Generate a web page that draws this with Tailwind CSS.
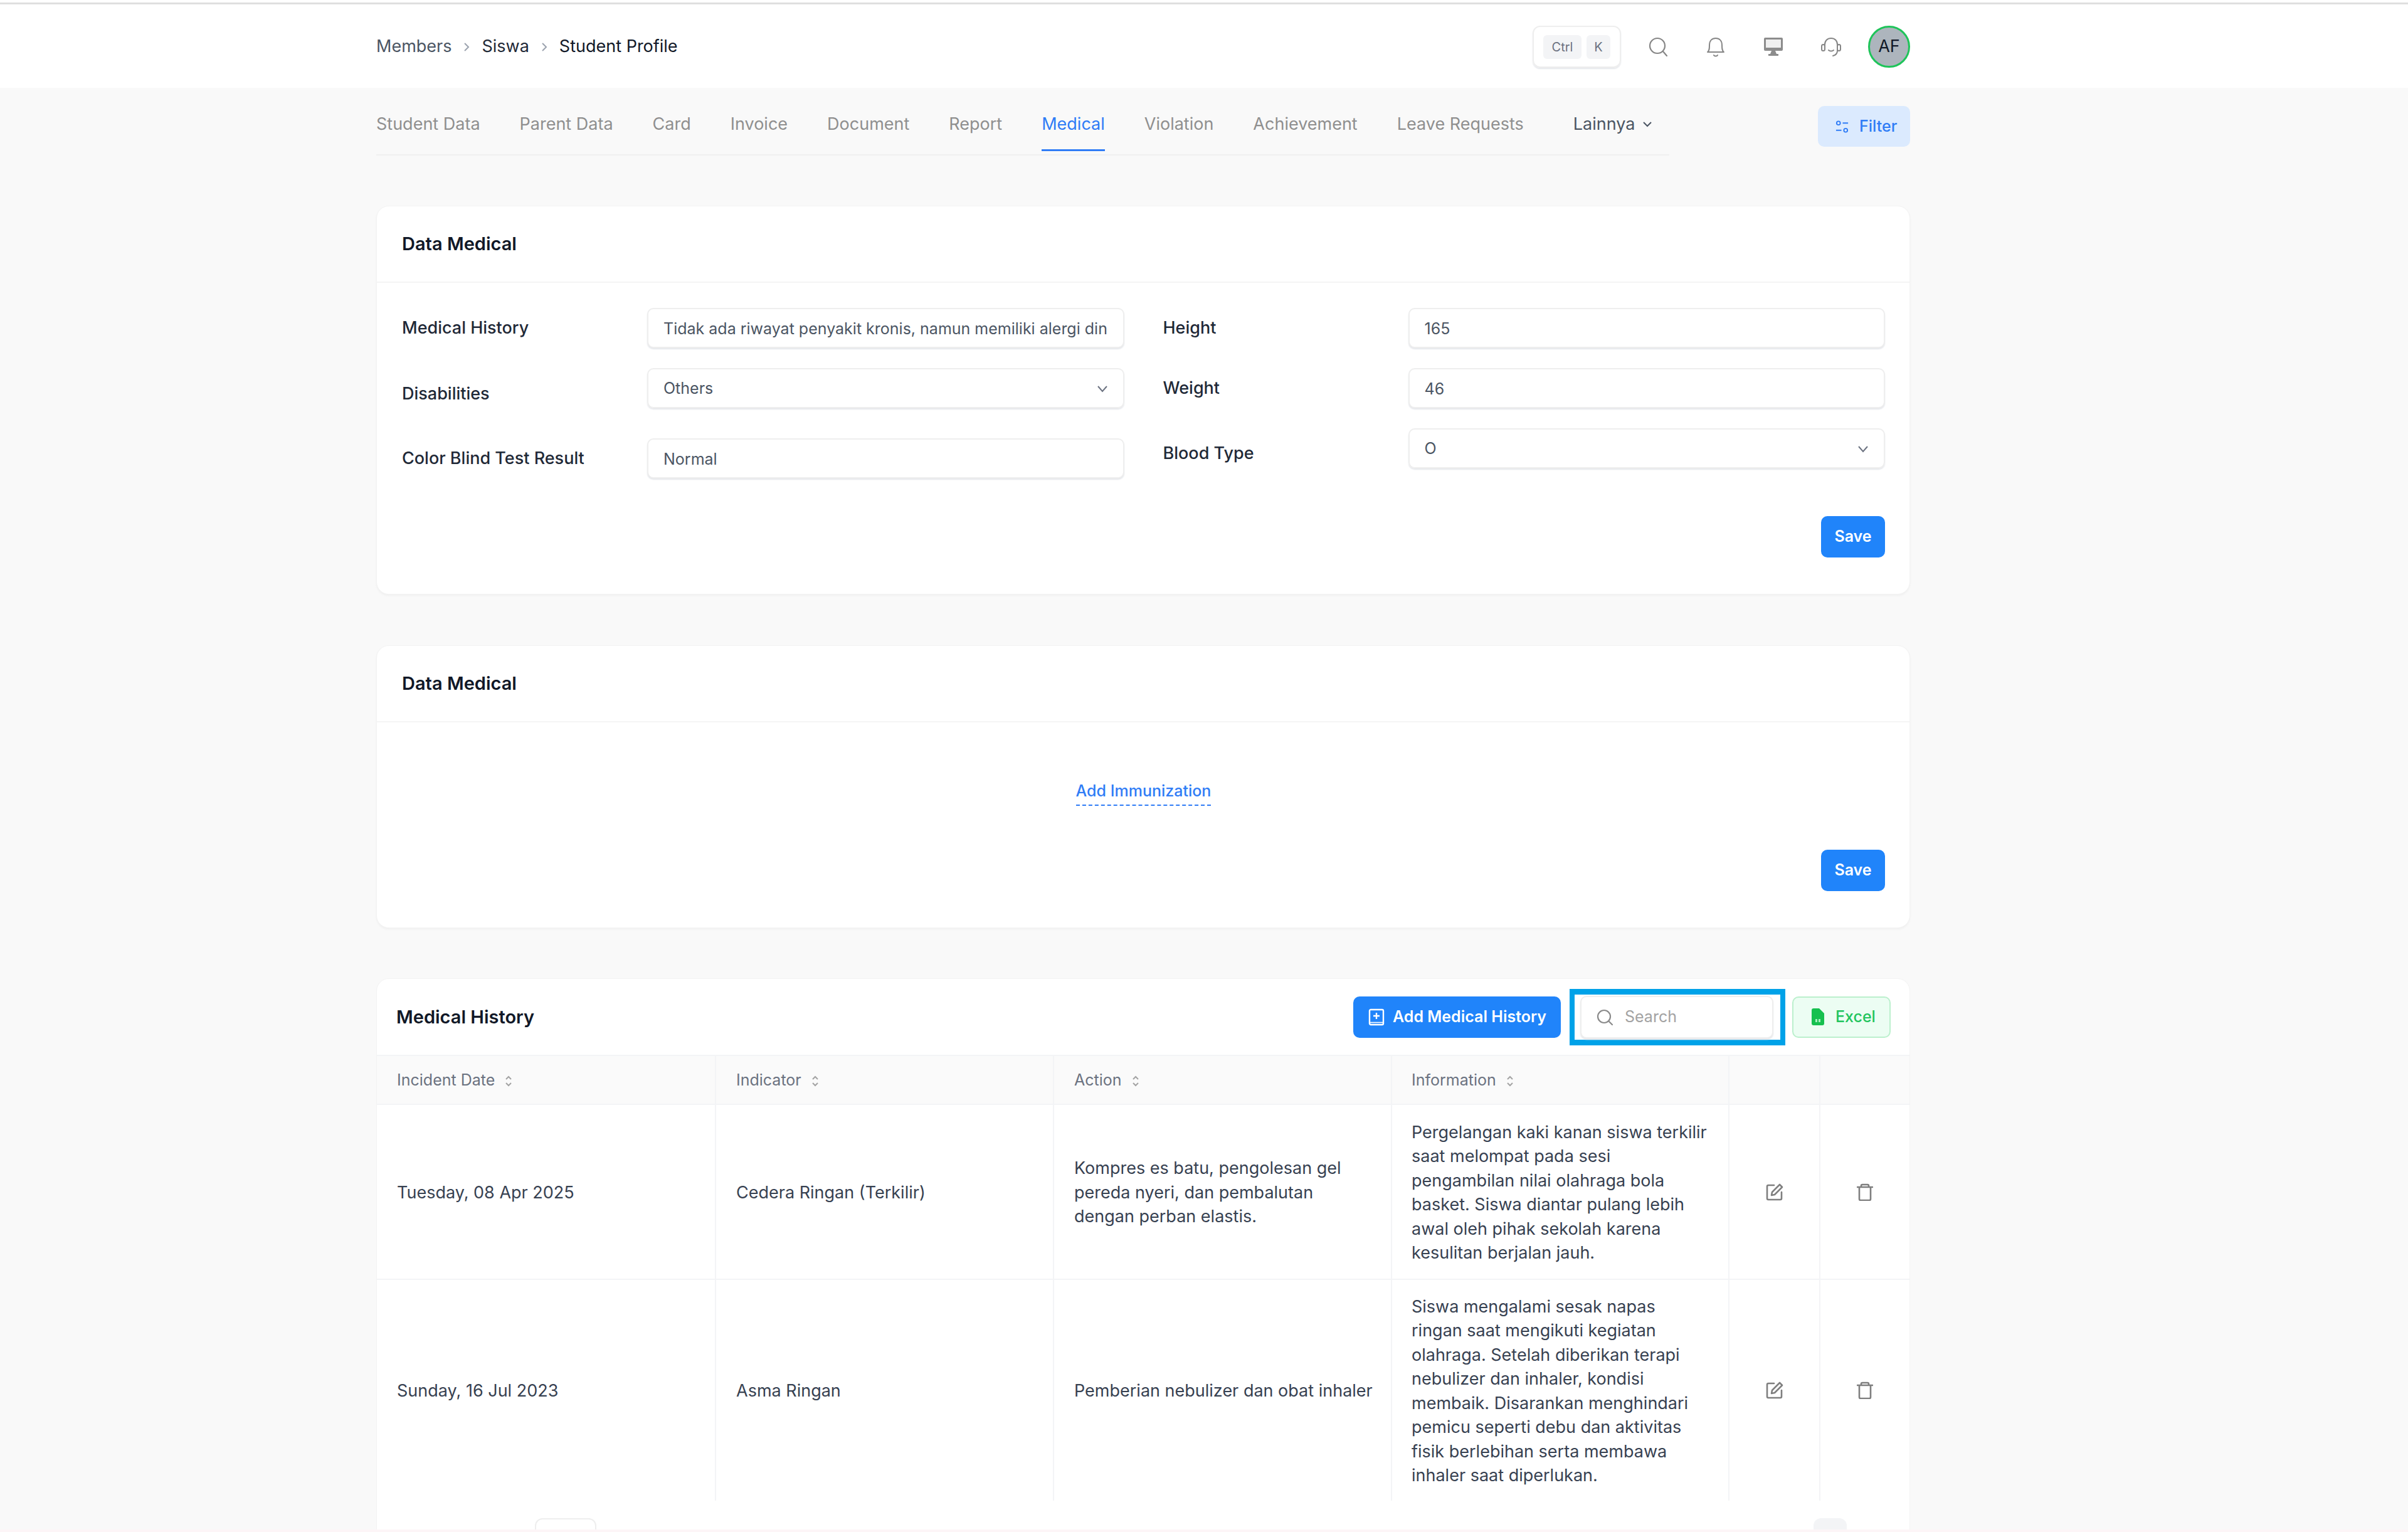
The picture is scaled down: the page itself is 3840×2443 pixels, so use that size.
<!DOCTYPE html>
<html lang="en">
<head>
    <meta charset="UTF-8">
    <meta name="viewport" content="width=device-width, initial-scale=1.0">
    <title>Student Profile - Medical</title>
    <script src="https://cdn.jsdelivr.net/npm/@tailwindcss/browser@4"></script>
</head>
<body class="bg-[#f9f9f9] font-['Inter',sans-serif] text-[27px] text-[#374151] h-[2443px] overflow-hidden relative">

    <!-- Top Bar -->
    <div class="h-[4px] bg-white"></div>
    <div class="h-[3px] bg-[#dfdfdf]"></div>

    <!-- Header -->
    <div class="h-[133px] bg-white pt-[2px]">
        <div class="w-[2446px] ml-[600px] h-full flex items-center justify-between">
            <div class="flex items-center text-[27px]">
                <span class="text-[#4b5563]">Members</span>
                <svg class="w-[16px] h-[24px] mx-[16px] text-[#9ca3af]" viewBox="0 0 16 24" fill="none" stroke="currentColor" stroke-width="2"><path d="M5 6l6 6-6 6"/></svg>
                <span class="text-[#1f2937]">Siswa</span>
                <svg class="w-[16px] h-[24px] mx-[16px] text-[#9ca3af]" viewBox="0 0 16 24" fill="none" stroke="currentColor" stroke-width="2"><path d="M5 6l6 6-6 6"/></svg>
                <span class="text-[#111827]">Student Profile</span>
            </div>
            <div class="flex items-center">
                <div class="w-[141px] h-[67px] border-2 border-[#eeeeee] rounded-[12px] shadow-[0_2px_2px_#e5e7eb] flex items-center gap-[8px] pl-[15px] text-[20px] text-[#6b7280]">
                    <span class="w-[61px] h-[38px] bg-[#f3f4f6] rounded-[6px] flex items-center justify-center">Ctrl</span>
                    <span class="w-[38px] h-[38px] bg-[#f3f4f6] rounded-[6px] flex items-center justify-center">K</span>
                </div>
                <!-- search -->
                <svg class="w-[30px] h-[31px] ml-[44px] text-[#868686]" viewBox="0 0 30 31" fill="none" stroke="currentColor" stroke-width="2.2" stroke-linecap="round"><circle cx="14" cy="14" r="12"/><path d="M23 23l6 7"/></svg>
                <!-- bell -->
                <svg class="w-[30px] h-[32px] ml-[62px] text-[#868686]" viewBox="0 0 30 32" fill="none" stroke="currentColor" stroke-width="2" stroke-linejoin="round" stroke-linecap="round"><path d="M2 24c3-2 3-6 3-11C5 6 9 2 15 2s10 4 10 11c0 5 0 9 3 11z"/><path d="M12 29c1 2 5 2 6 0"/></svg>
                <!-- monitor -->
                <svg class="w-[30px] h-[29px] ml-[62px] text-[#8c8c8c]" viewBox="0 0 30 29" fill="currentColor"><path d="M2 0h26a2 2 0 0 1 2 2v17a2 2 0 0 1-2 2H2a2 2 0 0 1-2-2V2a2 2 0 0 1 2-2z"/><path d="M3 3h24v13H3z" fill="#efefef"/><path d="M12 21h6l2 5h3v3H7v-3h3z"/></svg>
                <!-- headset -->
                <svg class="w-[32px] h-[32px] ml-[61px] text-[#868686]" viewBox="0 0 32 32" fill="none" stroke="currentColor" stroke-width="2" stroke-linecap="round"><path d="M6 13v-1C6 6 10 2 16 2s10 4 10 10v10c0 4-3 7-7 8"/><rect x="1" y="12" width="5" height="10" rx="2.5"/><rect x="26" y="12" width="5" height="10" rx="2.5"/><path d="M12 21c2 2 6 2 8 0"/></svg>
                <div class="w-[67px] h-[67px] ml-[43px] rounded-full border-[3px] border-[#1fc45a] bg-[#adb5bd] flex items-center justify-center text-[27px] text-[#111827]">AF</div>
            </div>
        </div>
    </div>

    <div class="w-[2446px] ml-[600px]">

        <!-- Tabs -->
        <div class="flex justify-between items-start h-[188px]">
            <div class="w-[2062px] h-[108px] border-b-2 border-[#f0f0f0] flex items-start gap-[63px] text-[27px] text-[#8f8f8f] pt-[38px]">
                <span>Student Data</span>
                <span>Parent Data</span>
                <span>Card</span>
                <span>Invoice</span>
                <span>Document</span>
                <span>Report</span>
                <span class="text-[#2f7cf6] border-b-[3px] border-[#2f7cf6] pb-[19px]">Medical</span>
                <span>Violation</span>
                <span>Achievement</span>
                <span>Leave Requests</span>
                <span class="flex items-center gap-[12px] ml-[16px] text-[#4b5563]">Lainnya
                    <svg class="w-[16px] h-[16px]" viewBox="0 0 16 16" fill="none" stroke="currentColor" stroke-width="2"><path d="M2 5l6 6 6-6"/></svg>
                </span>
            </div>
            <button class="mt-[29px] w-[147px] h-[65px] rounded-[10px] bg-[#dbeafe] text-[#2f7cf6] text-[25px] font-medium flex items-center pl-[27px] gap-[16px]">
                <svg class="w-[23px] h-[24px]" viewBox="0 0 24 24" fill="none" stroke="currentColor" stroke-width="2"><circle cx="6" cy="6" r="3"/><path d="M13 6h9M2 18h9"/><circle cx="18" cy="18" r="3"/></svg>
                Filter
            </button>
        </div>

        <!-- Data Medical Form -->
        <div class="h-[620px] bg-white rounded-[20px] border border-[#f3f3f3] shadow-[0_2px_3px_#f0f0f0] mb-[81px]">
            <div class="h-[122px] border-b-2 border-[#f5f5f5] flex items-center pl-[40px] text-[29px] font-semibold text-[#111827]">Data Medical</div>
            <div class="pl-[40px] pr-[39px] pt-[40px]">
                <div class="grid grid-cols-2 gap-x-[62px]">
                    <div>
                        <div class="flex items-start mb-[32px]">
                            <label class="w-[391px] shrink-0 leading-[64px] font-medium text-[#1f2937]">Medical History</label>
                            <input type="text" readonly value="Tidak ada riwayat penyakit kronis, namun memiliki alergi dingin dan debu" class="flex-1 min-w-0 h-[64px] px-[24px] pt-[2px] bg-white border-2 border-[#eeeeee] rounded-[10px] shadow-[0_2px_2px_#e5e7eb] text-[25px] text-[#4b5563] outline-none">
                        </div>
                        <div class="flex items-start mb-[39px]">
                            <label class="w-[391px] shrink-0 leading-[64px] pt-[9px] font-medium text-[#1f2937]">Disabilities</label>
                            <div class="flex-1 min-w-0 h-[64px] px-[24px] pt-[2px] border-2 border-[#eeeeee] rounded-[10px] shadow-[0_2px_2px_#e5e7eb] flex items-center justify-between text-[25px] text-[#4b5563]">Others
                                <svg class="w-[18px] h-[18px] text-[#6b7280]" viewBox="0 0 18 18" fill="none" stroke="currentColor" stroke-width="2"><path d="M2 5l7 8 7-8"/></svg>
                            </div>
                        </div>
                        <div class="flex items-start">
                            <label class="w-[391px] shrink-0 leading-[64px] font-medium text-[#1f2937]">Color Blind Test Result</label>
                            <input type="text" readonly value="Normal" class="flex-1 min-w-0 h-[64px] px-[24px] pt-[2px] bg-white border-2 border-[#eeeeee] rounded-[10px] shadow-[0_2px_2px_#e5e7eb] text-[25px] text-[#4b5563] outline-none">
                        </div>
                    </div>
                    <div>
                        <div class="flex items-start mb-[32px]">
                            <label class="w-[391px] shrink-0 leading-[64px] font-medium text-[#1f2937]">Height</label>
                            <input type="text" readonly value="165" class="flex-1 min-w-0 h-[64px] px-[24px] pt-[2px] bg-white border-2 border-[#eeeeee] rounded-[10px] shadow-[0_2px_2px_#e5e7eb] text-[25px] text-[#4b5563] outline-none">
                        </div>
                        <div class="flex items-start mb-[32px]">
                            <label class="w-[391px] shrink-0 leading-[64px] font-medium text-[#1f2937]">Weight</label>
                            <input type="text" readonly value="46" class="flex-1 min-w-0 h-[64px] px-[24px] pt-[2px] bg-white border-2 border-[#eeeeee] rounded-[10px] shadow-[0_2px_2px_#e5e7eb] text-[25px] text-[#4b5563] outline-none">
                        </div>
                        <div class="flex items-start">
                            <label class="w-[391px] shrink-0 leading-[64px] pt-[8px] font-medium text-[#1f2937]">Blood Type</label>
                            <div class="flex-1 min-w-0 h-[64px] px-[24px] pt-[2px] border-2 border-[#eeeeee] rounded-[10px] shadow-[0_2px_2px_#e5e7eb] flex items-center justify-between text-[25px] text-[#4b5563]">O
                                <svg class="w-[18px] h-[18px] text-[#6b7280]" viewBox="0 0 18 18" fill="none" stroke="currentColor" stroke-width="2"><path d="M2 5l7 8 7-8"/></svg>
                            </div>
                        </div>
                    </div>
                </div>
                <div class="flex justify-end mt-[60px]">
                    <button class="w-[102px] h-[66px] bg-[#2084fa] text-white text-[25px] font-semibold rounded-[10px]">Save</button>
                </div>
            </div>
        </div>

        <!-- Data Medical Immunization -->
        <div class="h-[451px] bg-white rounded-[20px] border border-[#f3f3f3] shadow-[0_2px_3px_#f0f0f0] mb-[80px]">
            <div class="h-[122px] border-b-2 border-[#f5f5f5] flex items-center pl-[40px] text-[29px] font-semibold text-[#111827]">Data Medical</div>
            <div class="pl-[40px] pr-[39px]">
                <div class="flex justify-center pt-[91px]">
                    <a class="text-[25px] font-medium text-[#2f7cf6] border-b-2 border-dashed border-[#2f7cf6] pb-[2px]">Add Immunization</a>
                </div>
                <div class="flex justify-end mt-[70px]">
                    <button class="w-[102px] h-[66px] bg-[#2084fa] text-white text-[25px] font-semibold rounded-[10px]">Save</button>
                </div>
            </div>
        </div>

        <!-- Medical History Table -->
        <div class="bg-white rounded-t-[20px] border border-[#f3f3f3] h-[890px]">
            <div class="h-[121px] flex items-center justify-between pl-[31px] pr-[30px]">
                <div class="text-[29px] font-semibold text-[#111827]">Medical History</div>
                <div class="flex items-center">
                    <button class="w-[331px] h-[66px] bg-[#2084fa] text-white text-[25px] font-semibold rounded-[10px] flex items-center justify-center gap-[12px]">
                        <svg class="w-[28px] h-[28px]" viewBox="0 0 28 28" fill="none" stroke="currentColor" stroke-width="2.4"><path d="M5 2h18a2 2 0 0 1 2 2v20a2 2 0 0 1-2 2H5a2 2 0 0 1-2-2V4a2 2 0 0 1 2-2z"/><path d="M3 22.5h22" stroke-width="1.6"/><path d="M14 7v10M9 12h10"/></svg>
                        Add Medical History
                    </button>
                    <div class="ml-[14px] w-[344px] h-[90px] border-y-[9px] border-x-[8px] border-[#00a2e8] pl-[9px] pr-[11px] pt-[2px]">
                        <div class="h-[68px] bg-white border-2 border-[#eeeeee] rounded-[10px] shadow-[0_2px_2px_#e5e7eb] flex items-center pl-[24px] gap-[19px] text-[25px] text-[#a3a3a3]">
                            <svg class="w-[26px] h-[26px] text-[#8a8a8a]" viewBox="0 0 26 26" fill="none" stroke="currentColor" stroke-width="2.2" stroke-linecap="round"><circle cx="12" cy="12" r="10"/><path d="M20 20l5 5"/></svg>
                            Search
                        </div>
                    </div>
                    <button class="ml-[11px] w-[157px] h-[66px] bg-[#ecfdf3] border-2 border-[#bbf0cd] text-[#22c55e] text-[25px] font-medium rounded-[10px] flex items-center pl-[29px] gap-[18px]">
                        <svg class="w-[20px] h-[27px]" viewBox="0 0 20 27"><path d="M3 0h9l8 8v16a3 3 0 0 1-3 3H3a3 3 0 0 1-3-3V3a3 3 0 0 1 3-3z" fill="#16c04f"/><path d="M6 17h3v5H6zM11 17h3v5h-3z" fill="#a7efbf"/></svg>
                        Excel
                    </button>
                </div>
            </div>
            <table class="w-full table-fixed border-collapse text-[27px] leading-[38.5px]">
                <colgroup>
                    <col class="w-[540px]">
                    <col class="w-[539px]">
                    <col class="w-[539px]">
                    <col class="w-[538px]">
                    <col class="w-[145px]">
                    <col>
                </colgroup>
                <thead>
                    <tr class="h-[78px] bg-[#fafafa] text-left text-[25px] font-normal text-[#6b7280]">
                        <th class="font-normal pl-[32px] border-r-2 border-y-2 border-[#f3f4f6]">Incident Date <svg class="inline w-[14px] h-[22px] ml-[8px] text-[#a3a3a3]" viewBox="0 0 14 22" fill="none" stroke="currentColor" stroke-width="2"><path d="M3 8l4-4 4 4M3 14l4 4 4-4"/></svg></th>
                        <th class="font-normal pl-[32px] border-r-2 border-y-2 border-[#f3f4f6]">Indicator <svg class="inline w-[14px] h-[22px] ml-[8px] text-[#a3a3a3]" viewBox="0 0 14 22" fill="none" stroke="currentColor" stroke-width="2"><path d="M3 8l4-4 4 4M3 14l4 4 4-4"/></svg></th>
                        <th class="font-normal pl-[32px] border-r-2 border-y-2 border-[#f3f4f6]">Action <svg class="inline w-[14px] h-[22px] ml-[8px] text-[#a3a3a3]" viewBox="0 0 14 22" fill="none" stroke="currentColor" stroke-width="2"><path d="M3 8l4-4 4 4M3 14l4 4 4-4"/></svg></th>
                        <th class="font-normal pl-[31px] border-r-2 border-y-2 border-[#f3f4f6]">Information <svg class="inline w-[14px] h-[22px] ml-[8px] text-[#a3a3a3]" viewBox="0 0 14 22" fill="none" stroke="currentColor" stroke-width="2"><path d="M3 8l4-4 4 4M3 14l4 4 4-4"/></svg></th>
                        <th class="border-r-2 border-y-2 border-[#f3f4f6]"></th>
                        <th class="border-y-2 border-[#f3f4f6]"></th>
                    </tr>
                </thead>
                <tbody>
                    <tr class="h-[279px]">
                        <td class="pl-[32px] pt-[3px] border-r-2 border-b-2 border-[#f3f4f6]">Tuesday, 08 Apr 2025</td>
                        <td class="pl-[32px] pt-[3px] border-r-2 border-b-2 border-[#f3f4f6]">Cedera Ringan (Terkilir)</td>
                        <td class="px-[32px] pt-[3px] border-r-2 border-b-2 border-[#f3f4f6]">Kompres es batu, pengolesan gel pereda nyeri, dan pembalutan dengan perban elastis.</td>
                        <td class="pl-[31px] pr-[30px] pt-[3px] border-r-2 border-b-2 border-[#f3f4f6]">Pergelangan kaki kanan siswa terkilir saat melompat pada sesi pengambilan nilai olahraga bola basket. Siswa diantar pulang lebih awal oleh pihak sekolah karena kesulitan berjalan jauh.</td>
                        <td class="border-r-2 border-b-2 border-[#f3f4f6]">
                            <svg class="w-[28px] h-[28px] mx-auto text-[#7f7f7f]" viewBox="0 0 28 28" fill="none" stroke="currentColor" stroke-width="2.6" stroke-linecap="round" stroke-linejoin="round"><path d="M13 3H4a2 2 0 0 0-2 2v19a2 2 0 0 0 2 2h19a2 2 0 0 0 2-2v-10"/><path d="M22 2l4 4-12 12-5 1 1-5z"/></svg>
                        </td>
                        <td class="border-b-2 border-[#f3f4f6]">
                            <svg class="w-[26px] h-[28px] mx-auto text-[#7f7f7f]" viewBox="0 0 26 28" fill="none" stroke="currentColor" stroke-width="2.6" stroke-linecap="round" stroke-linejoin="round"><path d="M1 6h24M7 6V4a2 2 0 0 1 2-2h8a2 2 0 0 1 2 2v2M4 6v19a2 2 0 0 0 2 2h14a2 2 0 0 0 2-2V6"/></svg>
                        </td>
                    </tr>
                    <tr class="h-[353px]">
                        <td class="pl-[32px] pt-[3px] border-r-2 border-[#f3f4f6]">Sunday, 16 Jul 2023</td>
                        <td class="pl-[32px] pt-[3px] border-r-2 border-[#f3f4f6]">Asma Ringan</td>
                        <td class="pl-[32px] pt-[3px] whitespace-nowrap border-r-2 border-[#f3f4f6]">Pemberian nebulizer dan obat inhaler</td>
                        <td class="pl-[31px] pr-[30px] pt-[3px] border-r-2 border-[#f3f4f6]">Siswa mengalami sesak napas ringan saat mengikuti kegiatan olahraga. Setelah diberikan terapi nebulizer dan inhaler, kondisi membaik. Disarankan menghindari pemicu seperti debu dan aktivitas fisik berlebihan serta membawa inhaler saat diperlukan.</td>
                        <td class="border-r-2 border-[#f3f4f6]">
                            <svg class="w-[28px] h-[28px] mx-auto text-[#7f7f7f]" viewBox="0 0 28 28" fill="none" stroke="currentColor" stroke-width="2.6" stroke-linecap="round" stroke-linejoin="round"><path d="M13 3H4a2 2 0 0 0-2 2v19a2 2 0 0 0 2 2h19a2 2 0 0 0 2-2v-10"/><path d="M22 2l4 4-12 12-5 1 1-5z"/></svg>
                        </td>
                        <td>
                            <svg class="w-[26px] h-[28px] mx-auto text-[#7f7f7f]" viewBox="0 0 26 28" fill="none" stroke="currentColor" stroke-width="2.6" stroke-linecap="round" stroke-linejoin="round"><path d="M1 6h24M7 6V4a2 2 0 0 1 2-2h8a2 2 0 0 1 2 2v2M4 6v19a2 2 0 0 0 2 2h14a2 2 0 0 0 2-2V6"/></svg>
                        </td>
                    </tr>
                </tbody>
            </table>
            <!-- Pagination, cut off by the window -->
            <div class="flex justify-between pt-[28px]">
                <div class="ml-[252px] w-[98px] h-[40px] border-2 border-[#eeeeee] rounded-[12px]"></div>
                <div class="mr-[100px] w-[53px] h-[40px] bg-[#f3f4f6] rounded-[12px]"></div>
            </div>
        </div>
    </div>

    <!-- Bottom edge strip -->
    <div class="absolute left-0 right-0 bottom-0 h-[4px] bg-[#fdf5f7]"></div>
</body>
</html>
